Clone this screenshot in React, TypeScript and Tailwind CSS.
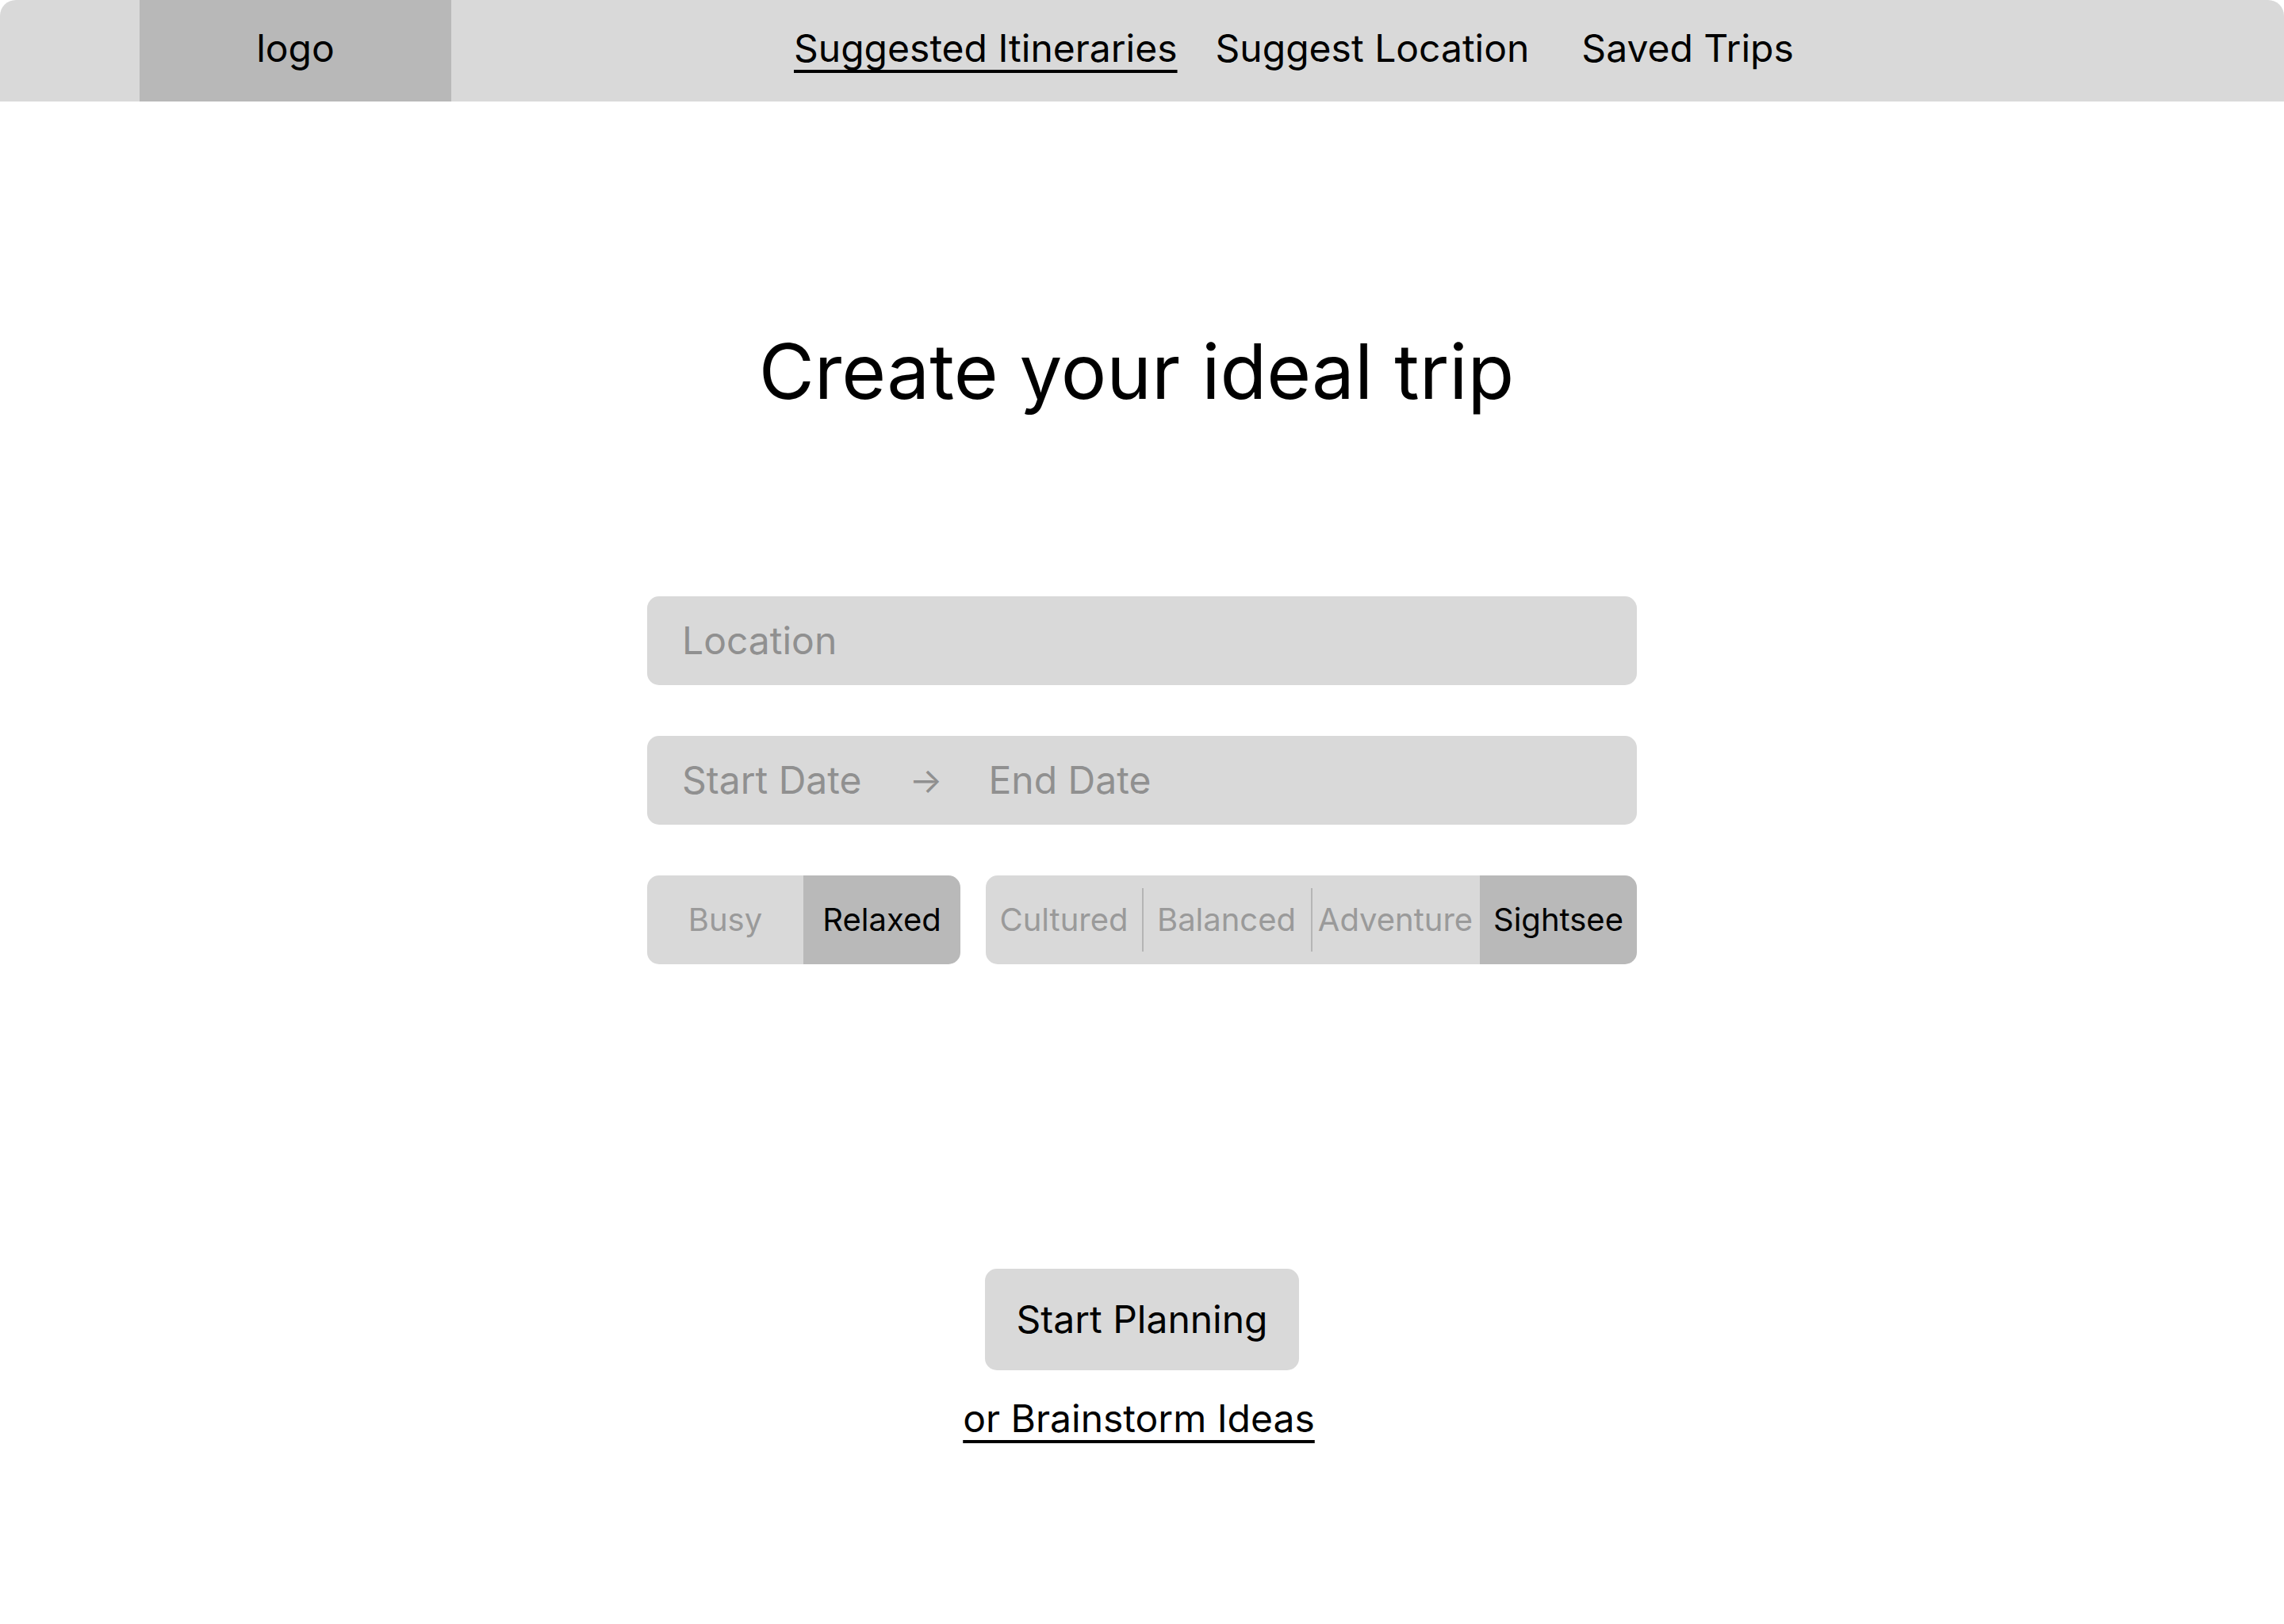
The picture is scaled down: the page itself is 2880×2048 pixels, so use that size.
const font = { fontFamily: "Inter, 'Noto Sans', sans-serif" };

function Segment({
  label,
  width,
  selected,
  divider,
}: {
  label: string;
  width: string;
  selected?: boolean;
  divider?: boolean;
}) {
  return (
    <div className={`relative flex h-full items-center justify-center ${width} ${selected ? "bg-[#b9b9b9] rounded-r-[15px] text-black" : "text-[#9a9a9a]"}`}>
      {divider && <div className="absolute left-0 top-[16px] bottom-[16px] w-[2px] bg-[#b5b5b5]" />}
      <span className="text-[40px] leading-none">{label}</span>
    </div>
  );
}

export default function App() {
  return (
    <div className="w-[2880px] h-[2048px] bg-white rounded-[20px] overflow-hidden text-black" style={font}>
      <nav className="flex h-[128px] items-center bg-[#d9d9d9]">
        <div className="ml-[176px] flex h-full w-[393px] items-center justify-center bg-[#b8b8b8] pb-[6px] text-[48px]">
          logo
        </div>
        <a className="mb-[6px] ml-[432px] text-[48px] underline decoration-[4px] underline-offset-[10px]">Suggested Itineraries</a>
        <a className="mb-[6px] ml-[48px] text-[48px]">Suggest Location</a>
        <a className="mb-[6px] ml-[66px] text-[48px]">Saved Trips</a>
      </nav>

      <h1 className="mt-[272px] h-[136px] pr-[14px] text-center text-[96px] leading-[136px]">Create your ideal trip</h1>

      <div className="mx-auto mt-[216px] flex w-[1248px] flex-col gap-[64px]">
        <div className="flex h-[112px] items-center rounded-[15px] bg-[#d9d9d9] px-[44px] text-[48px] text-[#909090]">
          Location
        </div>
        <div className="flex h-[112px] items-center rounded-[15px] bg-[#d9d9d9] px-[44px] text-[48px] text-[#909090]">
          <span>Start Date</span>
          <span className="ml-[60px] text-[44px]">→</span>
          <span className="ml-[58px]">End Date</span>
        </div>
        <div className="flex h-[112px] gap-[32px]">
          <div className="flex h-full overflow-hidden rounded-[15px] bg-[#d9d9d9]">
            <Segment label="Busy" width="w-[197px]" />
            <Segment label="Relaxed" width="w-[198px]" selected />
          </div>
          <div className="flex h-full flex-1 overflow-hidden rounded-[15px] bg-[#d9d9d9]">
            <Segment label="Cultured" width="w-[197px]" />
            <Segment label="Balanced" width="w-[213px]" divider />
            <Segment label="Adventure" width="w-[213px]" divider />
            <Segment label="Sightsee" width="flex-1" selected />
          </div>
        </div>
      </div>

      <div className="mt-[384px] flex flex-col items-center">
        <button className="h-[128px] w-[396px] rounded-[15px] bg-[#d9d9d9] text-[48px]">Start Planning</button>
        <a className="mt-[32px] pr-[8px] text-[48px] leading-[58px] underline decoration-[4px] underline-offset-[10px]">or Brainstorm Ideas</a>
      </div>
    </div>
  );
}
